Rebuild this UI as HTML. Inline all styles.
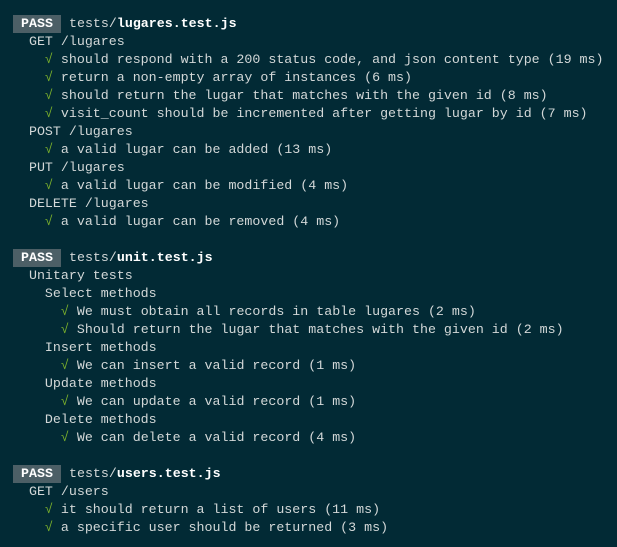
<!DOCTYPE html><html><head><style>
html,body{margin:0;padding:0;background:#022a35;width:617px;height:547px;overflow:hidden}
pre{margin:0;position:absolute;left:13px;top:15px;font-family:"Liberation Mono",monospace;font-size:13.3px;line-height:18px;color:#d3d8d8;white-space:pre}
.p{background:#4c5f66;color:#fff;font-weight:bold;display:inline-block;width:48px;text-align:center}
.g{color:#7fb52b}
b{color:#fff}
</style></head><body><pre><span class="p">PASS</span> tests/<b>lugares.test.js</b>
  GET /lugares
    <span class="g">√</span> should respond with a 200 status code, and json content type (19 ms)
    <span class="g">√</span> return a non-empty array of instances (6 ms)
    <span class="g">√</span> should return the lugar that matches with the given id (8 ms)
    <span class="g">√</span> visit_count should be incremented after getting lugar by id (7 ms)
  POST /lugares
    <span class="g">√</span> a valid lugar can be added (13 ms)
  PUT /lugares
    <span class="g">√</span> a valid lugar can be modified (4 ms)
  DELETE /lugares
    <span class="g">√</span> a valid lugar can be removed (4 ms)

<span class="p">PASS</span> tests/<b>unit.test.js</b>
  Unitary tests
    Select methods
      <span class="g">√</span> We must obtain all records in table lugares (2 ms)
      <span class="g">√</span> Should return the lugar that matches with the given id (2 ms)
    Insert methods
      <span class="g">√</span> We can insert a valid record (1 ms)
    Update methods
      <span class="g">√</span> We can update a valid record (1 ms)
    Delete methods
      <span class="g">√</span> We can delete a valid record (4 ms)

<span class="p">PASS</span> tests/<b>users.test.js</b>
  GET /users
    <span class="g">√</span> it should return a list of users (11 ms)
    <span class="g">√</span> a specific user should be returned (3 ms)
</pre></body></html>
